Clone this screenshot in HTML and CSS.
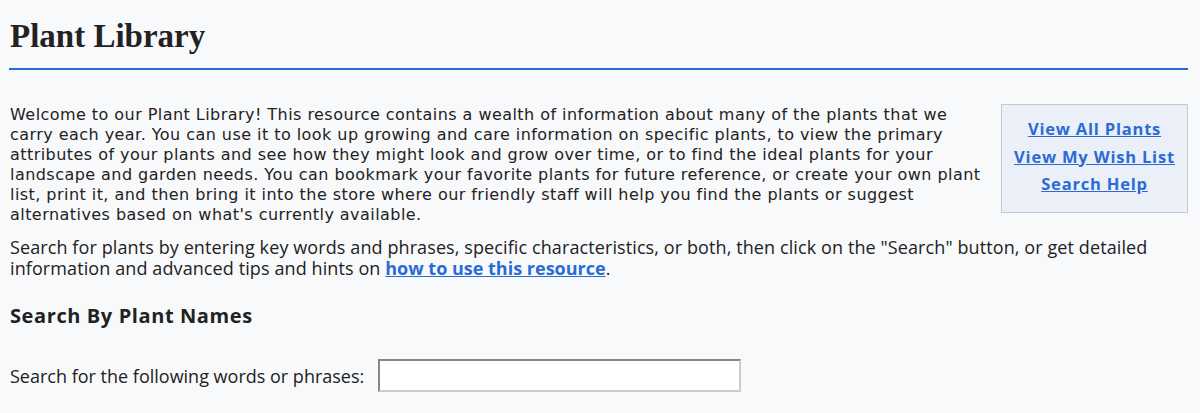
FILE: index.html
```html
<!DOCTYPE html>
<html lang="en">
<head>
    <meta charset="UTF-8">
    <meta name="viewport" content="width=device-width, initial-scale=1.0">
    <title>Plant Library</title>
    <link rel="stylesheet" href="styles.css">
</head>
<body>
    <div class="page">
        <h1 class="page-title">Plant Library</h1>

        <div class="intro">
            <p class="intro-text">Welcome to our Plant Library! This resource contains a wealth of information about many of the plants that we carry each year. You can use it to look up growing and care information on specific plants, to view the primary attributes of your plants and see how they might look and grow over time, or to find the ideal plants for your landscape and garden needs. You can bookmark your favorite plants for future reference, or create your own plant list, print it, and then bring it into the store where our friendly staff will help you find the plants or suggest alternatives based on what's currently available.</p>

            <div class="quick-links">
                <a href="#">View All Plants</a>
                <a href="#">View My Wish List</a>
                <a href="#">Search Help</a>
            </div>
        </div>

        <p class="search-help">Search for plants by entering key words and phrases, specific characteristics, or both, then click on the "Search" button, or get detailed information and advanced tips and hints on <a href="#">how to use this resource</a>.</p>

        <h2 class="section-title">Search By Plant Names</h2>

        <div class="search-row">
            <label for="keywords">Search for the following words or phrases:</label>
            <input type="text" id="keywords">
        </div>
    </div>
</body>
</html>
```

FILE: styles.css
```css
body {
    margin: 0;
    background-color: #f8f9fb;
    color: #222;
    font-family: 'Open Sans', sans-serif;
}
.page {
    padding: 0 12px 0 9px;
}
.page-title {
    font-family: 'Liberation Serif', serif;
    font-size: 33px;
    font-weight: bold;
    color: #222;
    margin: 0;
    padding: 18px 0 13px 1px;
    border-bottom: 2px solid #2a6bd6;
}
.intro {
    display: flex;
    align-items: flex-start;
    margin-top: 33px;
}
.intro-text {
    flex: 1;
    margin: 2px 16px 0 1px;
    font-family: 'DejaVu Sans', sans-serif;
    font-size: 16px;
    line-height: 20px;
    letter-spacing: 0.45px;
}
.quick-links {
    width: 185px;
    margin-top: 1px;
    padding: 13px 0 17px;
    background-color: #ebeff7;
    border: 1px solid #c8c8c8;
    display: flex;
    flex-direction: column;
    align-items: center;
    gap: 6px;
}
.quick-links a,
.search-help a {
    color: #2a6bd6;
    font-weight: bold;
}
.quick-links a {
    font-size: 16.5px;
    line-height: 21.5px;
    letter-spacing: 0.8px;
}
.search-help {
    margin: 12px 0 0 1px;
    font-size: 18px;
    line-height: 21px;
    letter-spacing: 0.1px;
}
.search-help a {
    letter-spacing: 0;
}
.section-title {
    font-size: 20px;
    font-weight: bold;
    letter-spacing: 0.6px;
    margin: 23px 0 0 1px;
}
.search-row {
    display: flex;
    align-items: center;
    gap: 14px;
    margin: 30px 0 0 1px;
    font-size: 18px;
}
.search-row input {
    width: 351px;
    height: 29px;
    border: 2px solid #aaa;
    border-top-color: #888;
    border-left-color: #888;
    border-bottom-color: #ccc;
    border-right-color: #ccc;
    background: #fff;
    padding: 0 4px;
    box-sizing: content-box;
}
```
